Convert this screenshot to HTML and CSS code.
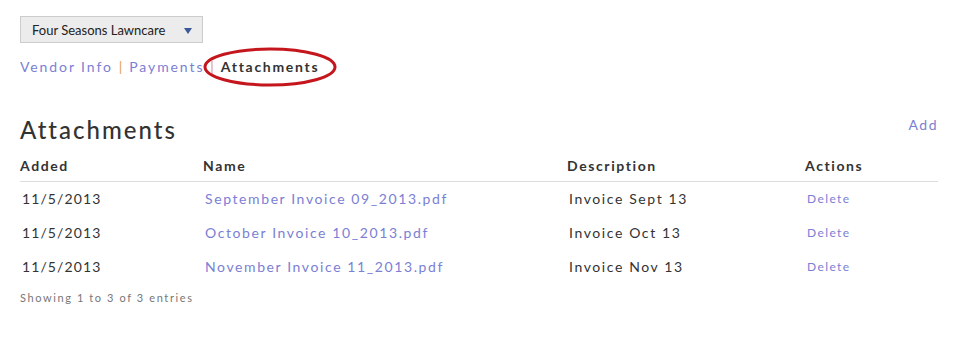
FILE: index.html
```html
<html>
	<head>
		<title>Vendor Attachments</title>
		<link rel="stylesheet" href="styles.css">
	</head>
	<body>
		<div class="page">
			<div class="vendor-select">
				<span>Four Seasons Lawncare</span>
				<span class="caret"></span>
			</div>
			<nav class="tabs">
				<a href="#">Vendor Info</a>
				<span class="sep">|</span>
				<a href="#">Payments</a>
				<span class="sep">|</span>
				<span class="current">
					Attachments
					<svg class="circle" width="134" height="40" viewBox="0 0 134 40">
						<ellipse cx="67" cy="20" rx="65" ry="18" fill="none" stroke="#c4161c" stroke-width="3"/>
					</svg>
				</span>
			</nav>
			<div class="title-row">
				<h1>Attachments</h1>
				<a href="#" class="add">Add</a>
			</div>
			<table>
				<thead>
					<tr>
						<th class="col-added">Added</th>
						<th class="col-name">Name</th>
						<th class="col-desc">Description</th>
						<th>Actions</th>
					</tr>
				</thead>
				<tbody>
					<tr>
						<td class="date">11/5/2013</td>
						<td><a href="#">September Invoice 09_2013.pdf</a></td>
						<td>Invoice Sept 13</td>
						<td><a href="#" class="delete">Delete</a></td>
					</tr>
					<tr>
						<td class="date">11/5/2013</td>
						<td><a href="#">October Invoice 10_2013.pdf</a></td>
						<td>Invoice Oct 13</td>
						<td><a href="#" class="delete">Delete</a></td>
					</tr>
					<tr>
						<td class="date">11/5/2013</td>
						<td><a href="#">November Invoice 11_2013.pdf</a></td>
						<td>Invoice Nov 13</td>
						<td><a href="#" class="delete">Delete</a></td>
					</tr>
				</tbody>
			</table>
			<div class="info">Showing 1 to 3 of 3 entries</div>
		</div>
	</body>
</html>
```

FILE: styles.css
```css
html {
	font: 14px Lato, 'Open Sans', sans-serif;
}
body {
	margin: 0;
	background-color: #fff;
	color: #333;
}
a {
	color: #7b80d4;
	text-decoration: none;
}
.page {
	padding: 16px 20px;
	width: 918px;
}
.vendor-select {
	display: flex;
	align-items: center;
	justify-content: space-between;
	box-sizing: border-box;
	width: 183px;
	height: 27px;
	padding: 0 10px 0 11px;
	background-color: #ececec;
	border: 1px solid #ccc;
	font-size: 13px;
	color: #222;
}
.caret {
	width: 0;
	height: 0;
	border-left: 4px solid transparent;
	border-right: 4px solid transparent;
	border-top: 6px solid #3b5998;
	margin-top: 2px;
}
.tabs {
	display: flex;
	align-items: center;
	margin-top: 15px;
	letter-spacing: 1.9px;
	line-height: 18px;
}
.sep {
	color: #e0a050;
	margin: 0 5px 0 6px;
}
.current {
	position: relative;
	font-weight: bold;
	color: #333;
	letter-spacing: 1.7px;
}
.circle {
	position: absolute;
	left: -18px;
	top: -11px;
}
.title-row {
	display: flex;
	justify-content: space-between;
	align-items: flex-start;
	margin-top: 38px;
}
h1 {
	margin: 0;
	font-size: 24px;
	font-weight: 500;
	letter-spacing: 2px;
	line-height: 32px;
}
.add {
	margin-top: 2px;
	letter-spacing: 1.5px;
	line-height: 18px;
}
table {
	width: 100%;
	border-collapse: collapse;
	margin-top: 5px;
	font-size: 14px;
	letter-spacing: 1.6px;
}
th {
	text-align: left;
	font-weight: bold;
	padding: 6px 0;
	line-height: 18px;
	border-bottom: 1px solid #ddd;
}
.col-added {
	width: 183px;
}
.col-name {
	width: 364px;
}
.col-desc {
	width: 238px;
}
td {
	padding: 8px 2px;
	line-height: 18px;
}
td.date {
	letter-spacing: 1.1px;
}
.delete {
	font-size: 12px;
	letter-spacing: 1.4px;
}
.info {
	margin-top: 7px;
	font-size: 11px;
	line-height: 14px;
	letter-spacing: 1.6px;
	color: #777;
}
```
